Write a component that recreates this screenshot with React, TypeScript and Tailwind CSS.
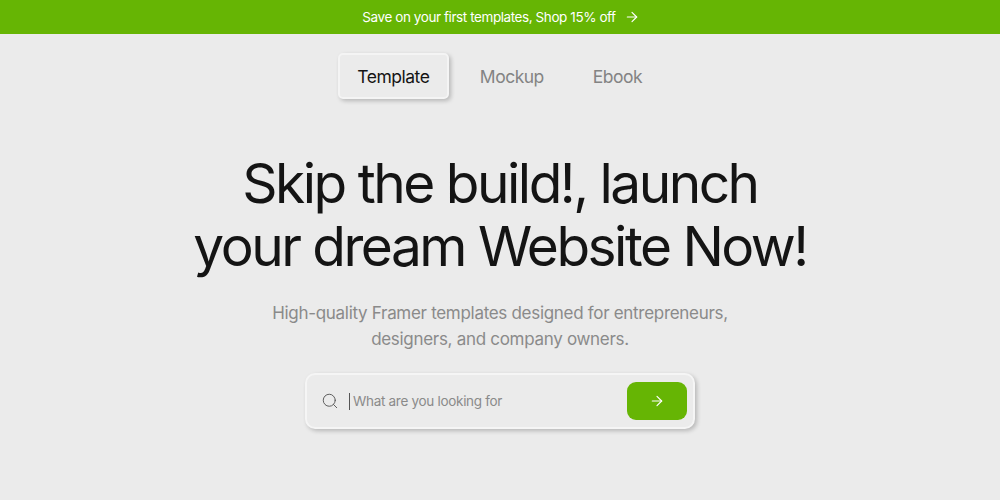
import { ArrowRight, Search } from "lucide-react";

const font = "font-['Inter','Noto_Sans',sans-serif]";

export default function App() {
  return (
    <div className={`${font} w-[1000px] h-[500px] overflow-hidden bg-[#ebebeb] flex flex-col items-center`}>
      <div className="w-full h-[34px] pl-[2px] bg-[#66b504] flex items-center justify-center gap-[8px] text-white text-[13.5px] tracking-[-0.42px]">
        <span>Save on your first templates, Shop 15% off</span>
        <ArrowRight className="w-[16px] h-[16px]" strokeWidth={1.75} />
      </div>

      <div className="mt-[19px] mr-[20px] flex items-center text-[17.5px] tracking-[-0.5px] text-[#838383]">
        <div className="w-[111px] h-[46px] pt-[2px] flex items-center justify-center rounded-[5px] bg-[#ebebeb] text-[#141414] border-2 border-[#f4f4f4] shadow-[2px_2px_4px_rgba(0,0,0,0.22)]">
          Template
        </div>
        <div className="ml-[31px] pt-[2px]">Mockup</div>
        <div className="ml-[49px] pt-[2px]">Ebook</div>
      </div>

      <h1 className="mt-[53px] text-center text-[55px] leading-[63px] font-normal tracking-[-2.5px] text-[#141414]">
        Skip the build!, launch
        <br />
        your dream Website Now!
      </h1>

      <p className="mt-[22px] text-center text-[17px] leading-[26px] tracking-[-0.3px] text-[#8a8a8a]">
        High-quality Framer templates designed for entrepreneurs,
        <br />
        designers, and company owners.
      </p>

      <div className="mt-[21px] w-[390px] h-[56px] flex items-center rounded-[10px] bg-[#ebebeb] border-2 border-[#f5f5f5] shadow-[2px_2px_4px_rgba(0,0,0,0.22)] pl-[14px] pr-[6px]">
        <Search className="w-[18px] h-[18px] text-[#555555]" strokeWidth={1.25} />
        <div className="ml-[10px] w-px h-[17px] bg-[#555555]" />
        <span className="ml-[3px] text-[13.5px] tracking-[-0.3px] text-[#8a8a8a]">What are you looking for</span>
        <button className="ml-auto w-[60px] h-[38px] rounded-[9px] bg-[#66b504] flex items-center justify-center text-white">
          <ArrowRight className="w-[16px] h-[16px]" strokeWidth={1.75} />
        </button>
      </div>
    </div>
  );
}
